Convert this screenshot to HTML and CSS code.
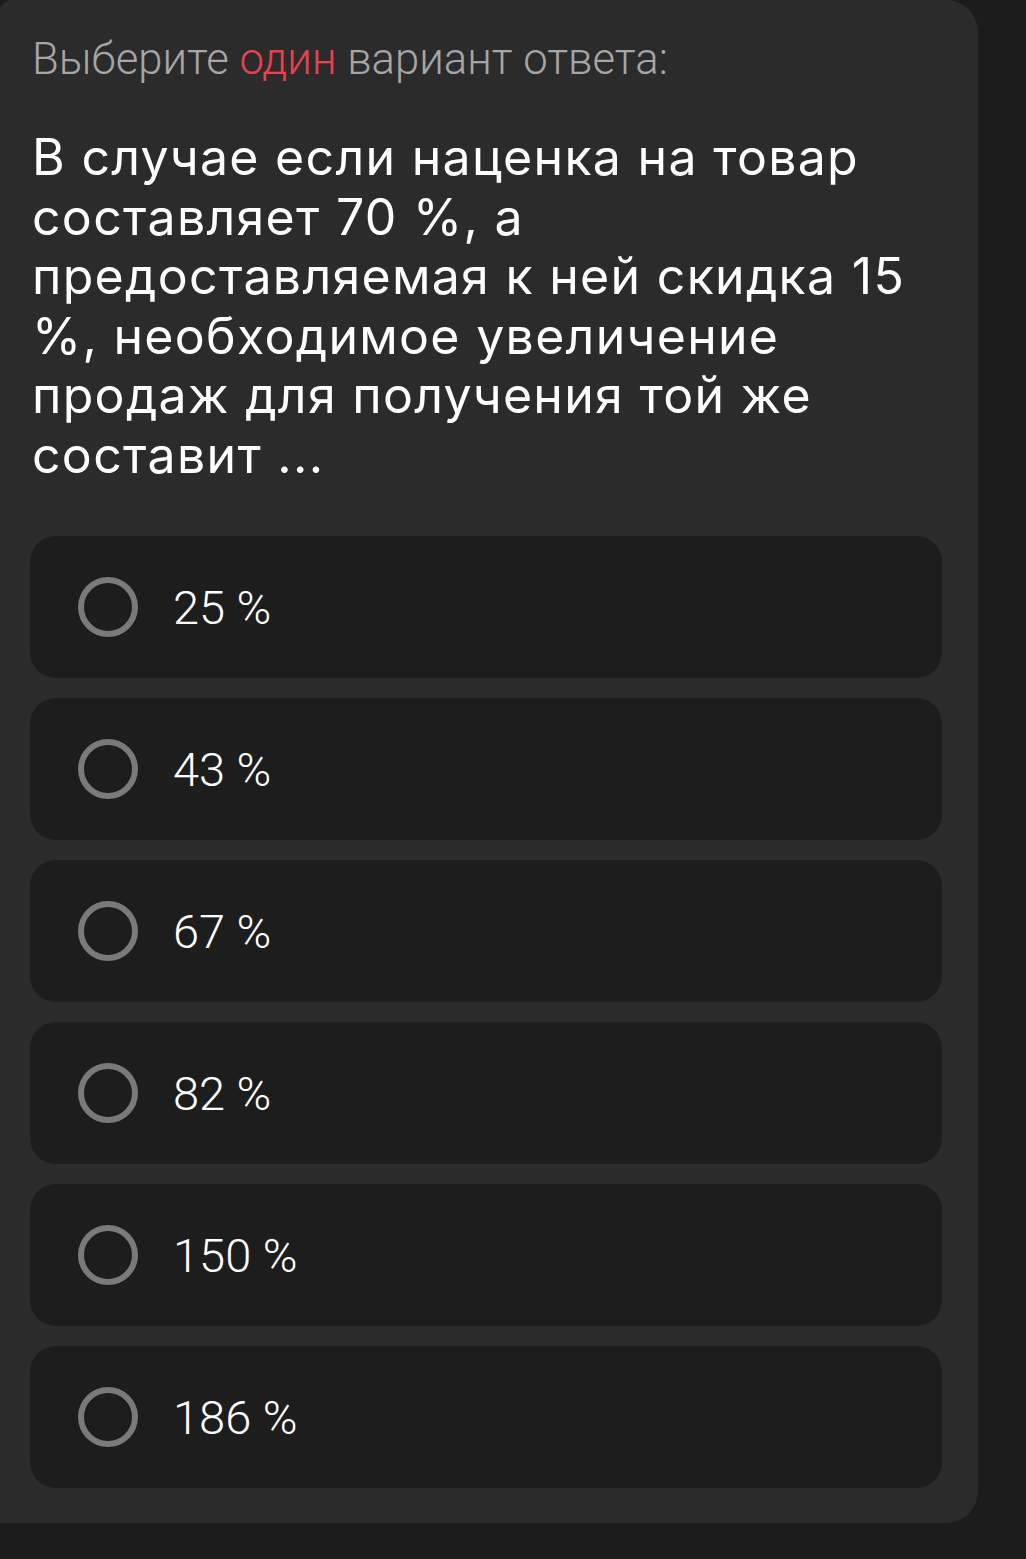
FILE: index.html
```html
<!DOCTYPE html>
<html lang="ru">
<head>
<meta charset="utf-8">
<title>Тест</title>
<link rel="stylesheet" href="styles.css">
</head>
<body>
<div class="card">
  <div class="hint">Выберите <span class="accent">один</span> вариант ответа:</div>
  <div class="question">В случае если наценка на товар составляет 70 %, а предоставляемая к ней скидка 15 %, необходимое увеличение продаж для получения той же составит ...</div>
  <div class="options">
    <div class="option"><span class="radio"></span><span class="label">25 %</span></div>
    <div class="option"><span class="radio"></span><span class="label">43 %</span></div>
    <div class="option"><span class="radio"></span><span class="label">67 %</span></div>
    <div class="option"><span class="radio"></span><span class="label">82 %</span></div>
    <div class="option"><span class="radio"></span><span class="label">150 %</span></div>
    <div class="option"><span class="radio"></span><span class="label">186 %</span></div>
  </div>
</div>
</body>
</html>
```
FILE: styles.css
```css
html, body {
  margin: 0;
  padding: 0;
  background: #1c1c1c;
}
body {
  font-family: Roboto, "Noto Sans", sans-serif;
  width: 1026px;
  min-height: 1559px;
}
.card {
  width: 978px;
  box-sizing: border-box;
  background: #2b2b2b;
  border-radius: 12px 32px 32px 0;
  padding: 33px 36px 35px 30px;
}
.hint {
  padding-left: 2px;
  font-family: Roboto, sans-serif;
  font-size: 43.7px;
  line-height: 52px;
  font-weight: 300;
  color: #a6a6a6;
}
.accent {
  color: #e8424f;
}
.question {
  margin-top: 43px;
  padding-left: 2px;
  font-family: Inter, "Noto Sans", sans-serif;
  font-size: 50px;
  line-height: 59.5px;
  font-weight: 400;
  letter-spacing: 1.3px;
  color: #ffffff;
}
.options {
  margin-top: 51px;
  display: flex;
  flex-direction: column;
  gap: 20px;
}
.option {
  height: 142px;
  background: #1d1d1d;
  border-radius: 26px;
  display: flex;
  align-items: center;
  padding-left: 48px;
}
.radio {
  width: 60px;
  height: 60px;
  box-sizing: border-box;
  border: 6.5px solid #7a7a7a;
  border-radius: 50%;
  flex: none;
}
.label {
  margin-left: 35px;
  font-family: Roboto, sans-serif;
  font-size: 47px;
  font-weight: 300;
  color: #ffffff;
}
```
